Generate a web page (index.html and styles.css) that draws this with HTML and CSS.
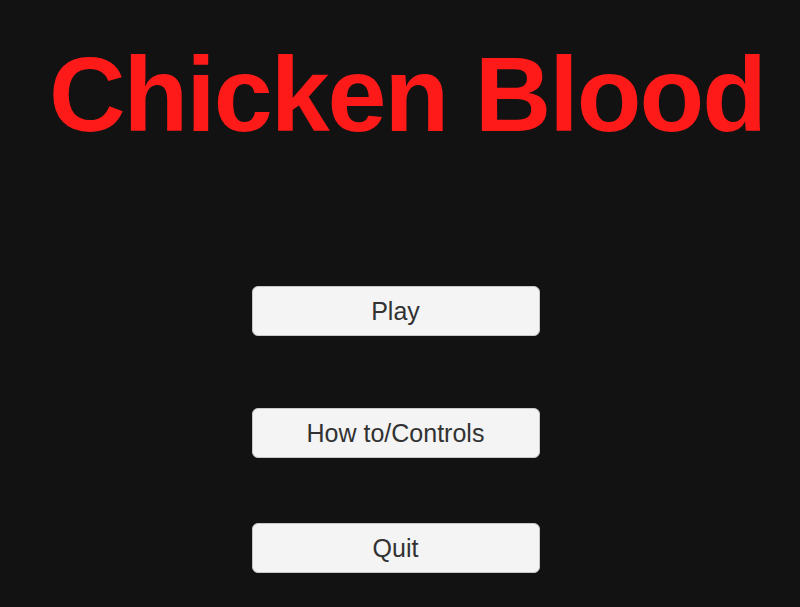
FILE: index.html
```html
<!DOCTYPE html>
<html lang="en">
<head>
    <meta charset="UTF-8">
    <meta name="viewport" content="width=device-width, initial-scale=1.0">
    <title>Chicken Blood</title>
    <link rel="stylesheet" href="styles.css">
</head>
<body>
    <h1 class="title">Chicken Blood</h1>

    <!-- Main menu -->
    <div class="menu">
        <button class="menu-button play">Play</button>
        <button class="menu-button howto">How to/Controls</button>
        <button class="menu-button quit">Quit</button>
    </div>
</body>
</html>
```

FILE: styles.css
```css
html, body {
    margin: 0;
    height: 100%;
}
body {
    font-family: 'Liberation Sans', Arial, sans-serif;
    background-color: #121212;
    color: #fff;
    overflow: hidden;
}
.title {
    margin: 41px 0 0 0;
    padding-left: 14px;
    font-size: 106px;
    line-height: 1;
    font-weight: bold;
    color: #ff1a1a;
    text-align: center;
    letter-spacing: -2px;
}
.menu {
    display: flex;
    flex-direction: column;
    align-items: center;
    padding-top: 139px;
    padding-right: 9px;
}
.menu-button {
    width: 288px;
    height: 50px;
    background-color: #f4f4f4;
    border: 1px solid #c8c8c8;
    border-radius: 6px;
    color: #323232;
    font-family: 'Liberation Sans', Arial, sans-serif;
    font-size: 25px;
    padding: 0;
    cursor: pointer;
}
.howto {
    margin-top: 72px;
}
.quit {
    margin-top: 65px;
}
```
